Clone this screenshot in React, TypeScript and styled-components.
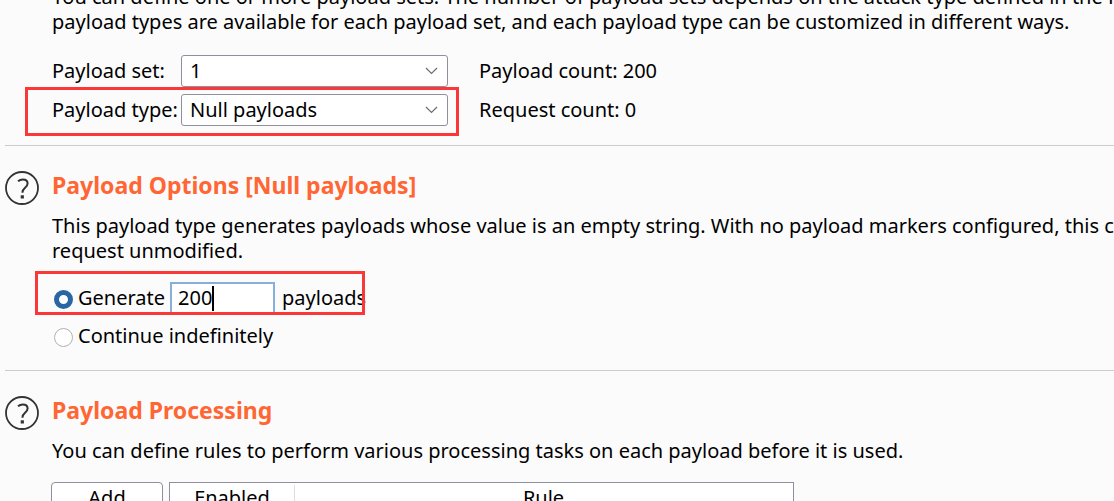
import React from "react";
import styled, { createGlobalStyle } from "styled-components";

const GlobalStyle = createGlobalStyle`
  *, *::before, *::after { box-sizing: border-box; }
  html, body { margin: 0; background: #fbfbfb; }
  body, button, input, select {
    font-family: "Noto Sans", "Open Sans", sans-serif;
    font-size: 20px;
    line-height: 25px;
    color: #000;
  }
`;

const Viewport = styled.div`
  height: 100vh;
  overflow: hidden;
`;

const Panel = styled.main`
  display: flex;
  flex-direction: column;
  margin-top: -16px;
  padding-left: 5px;
`;

const Section = styled.section<{ $first?: boolean }>`
  display: grid;
  grid-template-columns: 34px minmax(0, 1fr);
  column-gap: 13px;
  padding-top: ${(p) => (p.$first ? 0 : 24)}px;
  padding-bottom: ${(p) => (p.$first ? 19 : 18)}px;
  border-top: ${(p) => (p.$first ? "none" : "1px solid #cccccc")};
`;

const Content = styled.div`
  grid-column: 2;
`;

const HelpButton = styled.button`
  width: 34px;
  height: 34px;
  margin-top: 1px;
  padding: 0;
  border: none;
  background: none;
  svg { display: block; }
`;

const Title = styled.h2`
  margin: 0 0 13px;
  font-size: 23px;
  line-height: 30px;
  font-weight: 700;
  color: #ff6633;
`;

const Description = styled.p`
  margin: 0;
  white-space: nowrap;
`;

const Form = styled.div`
  display: flex;
  flex-direction: column;
  gap: 7px;
  margin-top: 21px;
`;

const FormRow = styled.div`
  position: relative;
  display: grid;
  grid-template-columns: 129px 267px 1fr;
  align-items: center;
  height: 32px;
`;

const FieldLabel = styled.label`
  padding-bottom: 2px;
`;

const SelectBox = styled.span`
  position: relative;
  display: block;
  svg {
    position: absolute;
    right: 10px;
    top: 12px;
    pointer-events: none;
  }
`;

const Select = styled.select`
  appearance: none;
  display: block;
  width: 100%;
  height: 32px;
  padding: 0 32px 2px 8px;
  border: 1px solid #8f8fa0;
  border-radius: 3px;
  background: #fff;
`;

const Count = styled.span`
  padding: 0 0 2px 31px;
`;

const Highlight = styled.span<{ $width: number; $height: number; $left: number; $top: number }>`
  position: absolute;
  left: ${(p) => p.$left}px;
  top: ${(p) => p.$top}px;
  width: ${(p) => p.$width}px;
  height: ${(p) => p.$height}px;
  border: 3px solid #fb3838;
  pointer-events: none;
`;

const Choices = styled.div`
  display: flex;
  flex-direction: column;
  gap: 6px;
  margin-top: 19px;
`;

const ChoiceRow = styled.div`
  position: relative;
  display: flex;
  align-items: center;
  height: 32px;
`;

const ChoiceText = styled.label`
  padding-bottom: 2px;
`;

const Radio = styled.input`
  appearance: none;
  width: 19px;
  height: 19px;
  margin: 2px 5px 0 2px;
  border: 1px solid #b0b0b0;
  border-radius: 50%;
  background: #fff;
  &:checked { border: 5px solid #2867a4; }
`;

const CountField = styled.span`
  position: relative;
  display: block;
  margin: 0 7px 0 5px;
`;

const CountInput = styled.input`
  display: block;
  width: 105px;
  height: 32px;
  padding: 0 6px 2px;
  border: 2px solid #87afda;
  background: #fff;
`;

const Caret = styled.span`
  position: absolute;
  left: 42px;
  top: 4px;
  width: 2px;
  height: 25px;
  background: #000;
`;

const RulesArea = styled.div`
  display: flex;
  align-items: flex-start;
  gap: 6px;
  margin: 19px 0 0 -1px;
`;

const Buttons = styled.div`
  display: flex;
  flex-direction: column;
  gap: 6px;
  width: 112px;
`;

const RuleButton = styled.button`
  height: 32px;
  padding: 0 0 2px;
  border: 1px solid #8f8fa0;
  border-radius: 4px;
  background: #fff;
`;

const TableFrame = styled.div`
  flex: 0 1 625px;
  height: 180px;
  border: 1px solid #8f8fa0;
  background: #fff;
`;

const RulesTable = styled.table`
  width: 100%;
  border-collapse: collapse;
  table-layout: fixed;
`;

const HeadCell = styled.th<{ $width?: number }>`
  width: ${(p) => (p.$width ? `${p.$width}px` : "auto")};
  height: 30px;
  padding: 0 0 2px;
  font-weight: 400;
  text-align: center;
  & + & {
    background: linear-gradient(#dddddd, #dddddd) 0 2px / 1px 100% no-repeat;
  }
`;

const Chevron = () => (
  <svg width="13" height="8" viewBox="0 0 13 8" fill="none" stroke="#6e6e6e" strokeWidth="1.2" aria-hidden="true">
    <path d="M1 1l5.5 5.5L12 1" />
  </svg>
);

const Help = () => (
  <HelpButton type="button" aria-label="Help">
    <svg width="34" height="34" viewBox="0 0 34 34" fill="none" stroke="#333333" aria-hidden="true">
      <circle cx="17" cy="17" r="16" strokeWidth="1.8" />
      <path d="M13 10.2C14.4 9 16 8.4 17.8 8.4c2.9 0 4.8 1.5 4.8 4 0 4.2-5.1 4.6-5.1 8.8v.6" strokeWidth="2" />
      <rect x="15.7" y="24.3" width="3.2" height="3.2" fill="#333333" stroke="none" />
    </svg>
  </HelpButton>
);

export default function App() {
  return (
    <Viewport>
      <GlobalStyle />
      <Panel>
        <Section $first>
          <Content>
            <Description>
              You can define one or more payload sets. The number of payload sets depends on the attack type defined in the Positions
              <br />
              payload types are available for each payload set, and each payload type can be customized in different ways.
            </Description>
            <Form>
              <FormRow>
                <FieldLabel htmlFor="payload-set">Payload set:</FieldLabel>
                <SelectBox>
                  <Select id="payload-set" defaultValue="1">
                    <option>1</option>
                  </Select>
                  <Chevron />
                </SelectBox>
                <Count>Payload count: 200</Count>
              </FormRow>
              <FormRow>
                <FieldLabel htmlFor="payload-type">Payload type:</FieldLabel>
                <SelectBox>
                  <Select id="payload-type" defaultValue="Null payloads">
                    <option>Null payloads</option>
                  </Select>
                  <Chevron />
                </SelectBox>
                <Count>Request count: 0</Count>
                <Highlight $left={-27} $top={-7} $width={434} $height={49} />
              </FormRow>
            </Form>
          </Content>
        </Section>

        <Section>
          <Help />
          <Content>
            <Title>Payload Options [Null payloads]</Title>
            <Description>
              This payload type generates payloads whose value is an empty string. With no payload markers configured, this can
              <br />
              request unmodified.
            </Description>
            <Choices>
              <ChoiceRow>
                <Radio type="radio" name="mode" id="generate" defaultChecked />
                <ChoiceText htmlFor="generate">Generate</ChoiceText>
                <CountField>
                  <CountInput type="text" id="payload-number" aria-label="Number of payloads" defaultValue="200" />
                  <Caret />
                </CountField>
                <ChoiceText htmlFor="payload-number">payloads</ChoiceText>
                <Highlight $left={-17} $top={-11} $width={330} $height={44} />
              </ChoiceRow>
              <ChoiceRow>
                <Radio type="radio" name="mode" id="continue" />
                <ChoiceText htmlFor="continue">Continue indefinitely</ChoiceText>
              </ChoiceRow>
            </Choices>
          </Content>
        </Section>

        <Section>
          <Help />
          <Content>
            <Title>Payload Processing</Title>
            <Description>
              You can define rules to perform various processing tasks on each payload before it is used.
            </Description>
            <RulesArea>
              <Buttons>
                <RuleButton type="button">Add</RuleButton>
              </Buttons>
              <TableFrame>
                <RulesTable>
                  <thead>
                    <tr>
                      <HeadCell scope="col" $width={124}>Enabled</HeadCell>
                      <HeadCell scope="col">Rule</HeadCell>
                    </tr>
                  </thead>
                </RulesTable>
              </TableFrame>
            </RulesArea>
          </Content>
        </Section>
      </Panel>
    </Viewport>
  );
}
